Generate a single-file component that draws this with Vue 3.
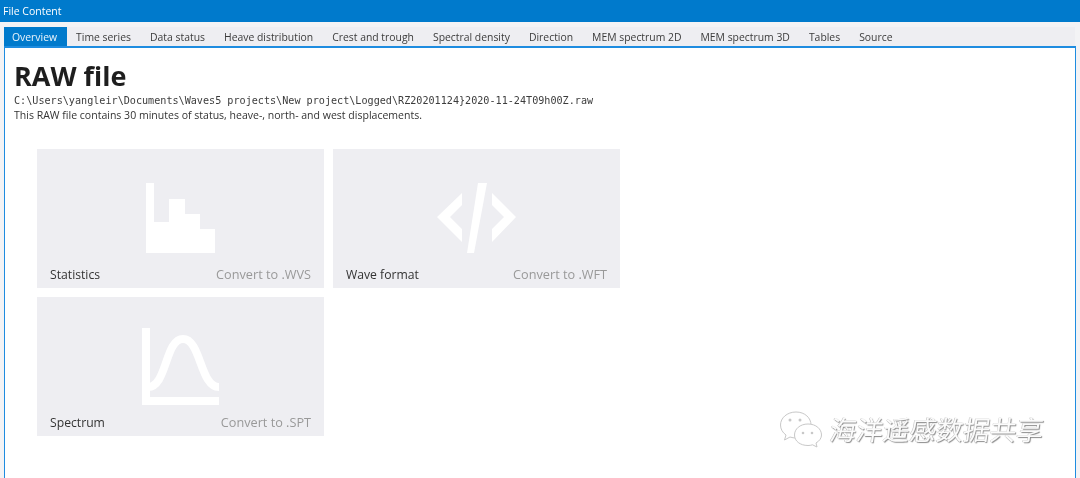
<script setup>
const tabs = ['Overview','Time series','Data status','Heave distribution','Crest and trough','Spectral density','Direction','MEM spectrum 2D','MEM spectrum 3D','Tables','Source']
const cards = [
  { name: 'Statistics', action: 'Convert to .WVS', icon: 'stats' },
  { name: 'Wave format', action: 'Convert to .WFT', icon: 'code' },
  { name: 'Spectrum', action: 'Convert to .SPT', icon: 'spectrum' },
]
</script>

<template>
  <div class="window">
    <header class="titlebar">File Content</header>
    <nav class="tabs">
      <span v-for="(t, i) in tabs" :key="t" class="tab" :class="{ active: i === 0 }">{{ t }}</span>
    </nav>
    <main class="panel">
      <h1 class="title">RAW file</h1>
      <div class="path">C:\Users\yangleir\Documents\Waves5 projects\New project\Logged\RZ20201124}2020-11-24T09h00Z.raw</div>
      <p class="desc">This RAW file contains 30 minutes of status, heave-, north- and west displacements.</p>
      <section class="cards">
        <article v-for="c in cards" :key="c.name" class="card">
          <div class="icon">
            <svg v-if="c.icon === 'stats'" width="70" height="70" viewBox="0 0 70 70">
              <path fill="#fff" d="M0 0H8V39H23V16H39V31H54V46H69V70H0Z" />
            </svg>
            <svg v-else-if="c.icon === 'code'" width="79" height="70" viewBox="0 0 79 70">
              <path fill="#fff" d="M25 10L0 34L25 59V46L13 34L25 22Z" />
              <path fill="#fff" d="M55 10L79 34L55 59V46L67 34L55 22Z" />
              <path fill="#fff" d="M41 0H50L37 70H30Z" />
            </svg>
            <svg v-else width="77" height="77" viewBox="0 0 77 77">
              <path fill="#fff" d="M0 0H8V69H77V77H0Z" />
              <path fill="none" stroke="#fff" stroke-width="8" d="M6 59C25 59 23 11 41 11C59 11 58 59 77 59" />
            </svg>
          </div>
          <footer class="card-foot">
            <span class="name">{{ c.name }}</span>
            <span class="action">{{ c.action }}</span>
          </footer>
        </article>
      </section>
    </main>
    <div class="watermark">
      <svg width="44" height="38" viewBox="0 0 44 38">
        <g fill="#fff" stroke="#c8c8c8" stroke-width="1">
          <path d="M17 2C8 2 1.500 8 1.500 15C1.500 19 3.500 22.500 7 25L5.500 30L11 27C13 27.700 15 28 17 28C26 28 32 22 32 15C32 8 26 2 17 2Z" />
          <path d="M29 14C21 14 15.500 19 15.500 25C15.500 31 21 35.500 29 35.500C30.500 35.500 32 35.300 33.500 34.800L38 37L37 33C40.500 31 42.500 28 42.500 25C42.500 19 37 14 29 14Z" />
        </g>
        <g fill="#c8c8c8">
          <circle cx="11" cy="10" r="1.500" /><circle cx="21" cy="10" r="1.500" />
          <circle cx="24" cy="23" r="1.300" /><circle cx="33" cy="23" r="1.300" />
        </g>
      </svg>
      <span class="wm-text">海洋遥感数据共享</span>
    </div>
  </div>
</template>

<style>
html, body { margin: 0; background: #fff; overflow: hidden; }
</style>

<style scoped>
.window {
  position: relative;
  width: 1080px;
  height: 478px;
  overflow: hidden;
  background: #f3f3f5;
  font-family: "Open Sans", "Noto Sans", sans-serif;
  display: flex;
  flex-direction: column;
  filter: blur(0.3px);
}
.titlebar {
  height: 22px;
  flex: none;
  box-sizing: border-box;
  padding: 0 3px;
  background: #007acc;
  color: #fff;
  font-size: 10.5px;
  line-height: 22px;
}
.tabs {
  height: 19px;
  margin: 5px 4px 0;
  flex: none;
  width: 1071px;
  box-sizing: border-box;
  display: flex;
  background: #eeeef2;
  color: #3b3b3b;
  font-size: 10.4px;
  line-height: 20px;
  white-space: nowrap;
}
.tab { padding: 0 9.5px; }
.tab.active { padding: 0 9.5px 0 8px; background: #007acc; color: #eaf4fb; }
.panel {
  flex: 1;
  margin: 0 4px;
  width: 1072px;
  box-sizing: border-box;
  border: 1px solid #1e8ce0;
  border-top-width: 2px;
  border-bottom: 0;
  background: #fff;
  padding: 0 9px;
}
.title {
  margin: 11px 0 0;
  font-size: 27px;
  line-height: 33px;
  font-weight: 700;
  color: #1e1e1e;
}
.path {
  font-family: "DejaVu Sans Mono", monospace;
  font-size: 10.14px;
  line-height: 12px;
  margin-top: 3px;
  color: #3c3c3c;
  white-space: nowrap;
}
.desc {
  margin: 1px 0 0;
  font-size: 10.54px;
  line-height: 15px;
  color: #333;
}
.cards {
  margin: 26px 0 0 23px;
  display: grid;
  grid-template-columns: 287px 287px;
  grid-auto-rows: 139px;
  gap: 9px;
}
.card {
  background: #eeeef2;
  box-sizing: border-box;
  padding-top: 18px;
}
.icon {
  height: 102px;
  display: flex;
  align-items: center;
  justify-content: center;
}
.card-foot {
  display: flex;
  justify-content: space-between;
  align-items: baseline;
  padding: 0 13px;
  line-height: 14px;
  margin-top: -2px;
}
.name { color: #333; font-size: 12.2px; }
.action { color: #999; font-size: 12.7px; }
.watermark {
  position: absolute;
  left: 779px;
  top: 410px;
  display: flex;
  align-items: center;
  gap: 7px;
}
.wm-text {
  font-family: "Noto Sans CJK SC", sans-serif;
  font-size: 26.7px;
  line-height: 38px;
  transform: skewX(-8deg);
  color: #fbfbfb;
  text-shadow: 1px 1px 1px #8a8a8a, -0.5px -0.5px 0 #b8b8b8;
  white-space: nowrap;
}
</style>
